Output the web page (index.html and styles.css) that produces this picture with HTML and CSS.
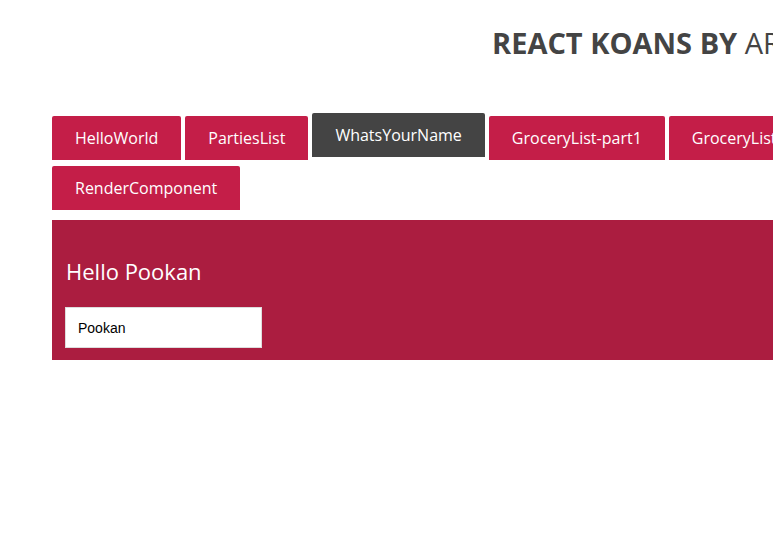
FILE: index.html
```html
<!DOCTYPE html>
<html>
<head>
<meta charset="utf-8">
<link rel="stylesheet" href="styles.css">
</head>
<body>
<div class="page">
  <h1 class="title"><strong>REACT KOANS BY</strong> <span class="author">ARFAT SALMAN</span></h1>
  <ul class="tabs">
    <li class="tab">HelloWorld</li>
    <li class="tab">PartiesList</li>
    <li class="tab active">WhatsYourName</li>
    <li class="tab">GroceryList-part1</li>
    <li class="tab">GroceryList-part2</li>
    <li class="tab">RenderComponent</li>
  </ul>
  <div class="panel">
    <h2 class="greeting">Hello Pookan</h2>
    <input class="name-input" type="text" value="Pookan">
  </div>
</div>
</body>
</html>
```
FILE: styles.css
```css
html, body {
  margin: 0;
  padding: 0;
  overflow: hidden;
  background: #fff;
}
body {
  font-family: "Open Sans", sans-serif;
  color: #444;
}
.page {
  padding-left: 52px;
  width: 1000px;
}
.title {
  margin: 0;
  padding: 23px 0 0 440px;
  font-size: 29px;
  line-height: 40px;
  font-weight: 400;
  color: #444;
  white-space: nowrap;
}
.title strong {
  font-weight: 700;
}
.tabs {
  list-style: none;
  margin: 0;
  padding: 53px 0 0 0;
  display: flex;
  flex-wrap: wrap;
  width: 860px;
  row-gap: 6px;
  column-gap: 4px;
}
.tab {
  height: 44px;
  line-height: 44px;
  padding: 0 23px;
  background: #c41e48;
  color: #fff;
  font-size: 16px;
  border-radius: 2px 2px 0 0;
  white-space: nowrap;
}
.tab.active {
  background: #444;
  transform: translateY(-3px);
}
.panel {
  margin-top: 10px;
  background: #ab1d40;
  width: 900px;
  height: 140px;
  padding: 0 14px;
  box-sizing: border-box;
}
.greeting {
  margin: 0;
  padding-top: 37px;
  font-size: 22px;
  line-height: 28px;
  font-weight: 400;
  color: #fff;
}
.name-input {
  margin-top: 22px;
  margin-left: -1px;
  width: 197px;
  height: 41px;
  box-sizing: border-box;
  border: 1px solid #ddd;
  padding: 0 12px;
  font-family: "Liberation Sans", Arial, sans-serif;
  font-size: 14px;
  color: #000;
  background: #fff;
  outline: none;
}
```
